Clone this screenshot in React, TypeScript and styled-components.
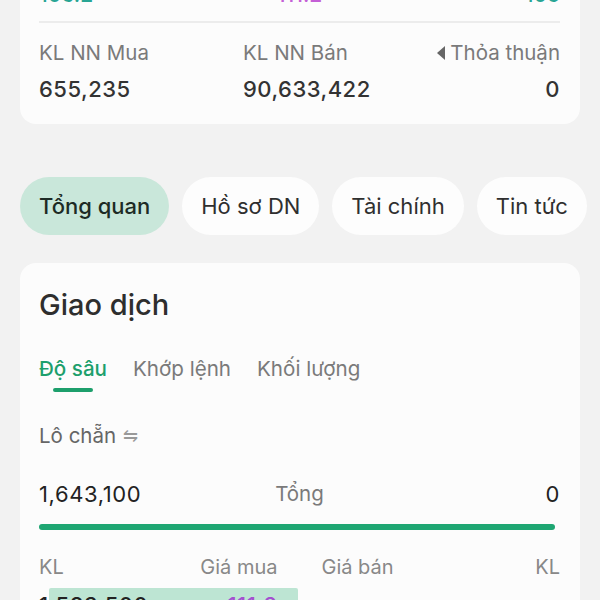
import React from "react";
import styled, { createGlobalStyle } from "styled-components";

const GlobalStyle = createGlobalStyle`
  html, body {
    margin: 0;
    padding: 0;
    background: #f2f2f2;
    font-family: Inter, "Noto Sans", "Liberation Sans", sans-serif;
    color: #333;
  }
`;

const Page = styled.div`
  width: 600px;
  height: 600px;
  overflow: hidden;
  padding: 0 20px;
  box-sizing: border-box;
`;

const Card = styled.div<{ $top?: number }>`
  background: #fcfcfc;
  border-radius: 16px;
  margin-top: ${(p) => p.$top ?? 0}px;
  padding: 16px 20px 21px 19px;
`;

const StatRow = styled.div`
  display: grid;
  grid-template-columns: 1fr 1fr 1fr;
  line-height: 24px;
  font-size: 21px;
  font-weight: 500;
`;

const StatValue = styled.span<{ $color: string; $align?: string }>`
  color: ${(p) => p.$color};
  text-align: ${(p) => p.$align ?? "left"};
`;

const Divider = styled.div`
  height: 2px;
  background: #ececec;
  margin-top: 14px;
`;

const InfoGrid = styled.div`
  display: grid;
  grid-template-columns: 204px 1fr auto;
  row-gap: 8px;
  margin-top: 16px;
`;

const InfoLabel = styled.div<{ $align?: string }>`
  font-size: 20.5px;
  line-height: 28px;
  color: #7a7a7a;
  display: flex;
  align-items: center;
  justify-content: ${(p) => (p.$align === "right" ? "flex-end" : "flex-start")};
  gap: 5px;
`;

const Caret = styled.span`
  width: 0;
  height: 0;
  border-top: 7px solid transparent;
  border-bottom: 7px solid transparent;
  border-right: 8px solid #666;
`;

const InfoValue = styled.div<{ $align?: string }>`
  font-size: 22px;
  line-height: 28px;
  font-weight: 500;
  color: #333;
  letter-spacing: 0.5px;
  text-align: ${(p) => p.$align ?? "left"};
`;

const PillBar = styled.div`
  display: flex;
  gap: 13px;
  margin-top: 53px;
  white-space: nowrap;
`;

const Pill = styled.div<{ $active?: boolean }>`
  height: 58px;
  padding: 0 19px;
  border-radius: 29px;
  display: flex;
  align-items: center;
  font-size: 22px;
  font-weight: ${(p) => (p.$active ? 500 : 400)};
  background: ${(p) => (p.$active ? "#c9e7da" : "#fdfdfd")};
  color: ${(p) => (p.$active ? "#1d2b25" : "#2f2f2f")};
  flex-shrink: 0;
`;

const TradeCard = styled.div`
  background: #fcfcfc;
  border-radius: 16px;
  margin-top: 28px;
  padding: 26px 20px 0 19px;
`;

const Title = styled.h2`
  margin: 0;
  font-size: 29px;
  line-height: 32px;
  font-weight: 500;
  color: #2e2e2e;
`;

const SubTabs = styled.div`
  display: flex;
  gap: 26px;
  margin-top: 34px;
`;

const SubTab = styled.div<{ $active?: boolean }>`
  display: flex;
  flex-direction: column;
  align-items: center;
  font-size: 20.6px;
  line-height: 28px;
  color: ${(p) => (p.$active ? "#1d9f6c" : "#7a7a7a")};
  font-weight: ${(p) => (p.$active ? 500 : 400)};

  &::after {
    content: "";
    width: 40px;
    height: 4px;
    border-radius: 2px;
    margin-top: 5px;
    background: ${(p) => (p.$active ? "#1d9f6c" : "transparent")};
  }
`;

const LotLabel = styled.div`
  margin-top: 31px;
  font-size: 20.5px;
  line-height: 26px;
  color: #666;
  display: flex;
  align-items: center;
  gap: 7px;
`;

const SwapIcon = styled.span`
  font-size: 18px;
  color: #999;
`;

const TotalRow = styled.div`
  margin-top: 31px;
  display: grid;
  grid-template-columns: 1fr auto 1fr;
  font-size: 22px;
  line-height: 28px;
`;

const TotalValue = styled.span<{ $align?: string }>`
  color: #222;
  letter-spacing: 0.6px;
  text-align: ${(p) => p.$align ?? "left"};
`;

const TotalLabel = styled.span`
  color: #7a7a7a;
  font-size: 20.5px;
`;

const Progress = styled.div`
  margin-top: 16px;
  margin-right: 5px;
  height: 6px;
  border-radius: 3px;
  background: #1ea672;
`;

const BookHead = styled.div`
  margin-top: 25px;
  display: grid;
  grid-template-columns: 1fr 1fr;
  font-size: 20px;
  line-height: 24px;
  color: #888;
`;

const HeadSide = styled.div<{ $side: "buy" | "sell" }>`
  display: flex;
  justify-content: space-between;
  padding: ${(p) => (p.$side === "buy" ? "0 22px 0 0" : "0 0 0 22px")};
`;

const BookRow = styled.div`
  margin-top: 9px;
  display: grid;
  grid-template-columns: 1fr 1fr;
`;

const BuyCell = styled.div`
  position: relative;
  display: flex;
  justify-content: space-between;
  padding: 3px 22px 0 0;
  font-size: 22px;
  line-height: 28px;
  font-weight: 500;
`;

const DepthBar = styled.div`
  position: absolute;
  top: 0;
  bottom: 0;
  right: 2px;
  background: #bde5d3;
  border-radius: 2px;
`;

const CellText = styled.span<{ $color?: string }>`
  position: relative;
  color: ${(p) => p.$color ?? "#222"};
  letter-spacing: 0.5px;
`;

export default function App() {
  return (
    <Page>
      <GlobalStyle />
      <Card $top={-33}>
        <StatRow>
          <StatValue $color="#28a594">106.2</StatValue>
          <StatValue $color="#c45fd6" $align="center">111.2</StatValue>
          <StatValue $color="#28a594" $align="right">105</StatValue>
        </StatRow>
        <Divider />
        <InfoGrid>
          <InfoLabel>KL NN Mua</InfoLabel>
          <InfoLabel>KL NN Bán</InfoLabel>
          <InfoLabel $align="right">
            <Caret />
            Thỏa thuận
          </InfoLabel>
          <InfoValue>655,235</InfoValue>
          <InfoValue>90,633,422</InfoValue>
          <InfoValue $align="right">0</InfoValue>
        </InfoGrid>
      </Card>

      <PillBar>
        <Pill $active>Tổng quan</Pill>
        <Pill>Hồ sơ DN</Pill>
        <Pill>Tài chính</Pill>
        <Pill>Tin tức</Pill>
      </PillBar>

      <TradeCard>
        <Title>Giao dịch</Title>
        <SubTabs>
          <SubTab $active>Độ sâu</SubTab>
          <SubTab>Khớp lệnh</SubTab>
          <SubTab>Khối lượng</SubTab>
        </SubTabs>
        <LotLabel>
          Lô chẵn <SwapIcon>⇋</SwapIcon>
        </LotLabel>
        <TotalRow>
          <TotalValue>1,643,100</TotalValue>
          <TotalLabel>Tổng</TotalLabel>
          <TotalValue $align="right">0</TotalValue>
        </TotalRow>
        <Progress />
        <BookHead>
          <HeadSide $side="buy">
            <span>KL</span>
            <span>Giá mua</span>
          </HeadSide>
          <HeadSide $side="sell">
            <span>Giá bán</span>
            <span>KL</span>
          </HeadSide>
        </BookHead>
        <BookRow>
          <BuyCell>
            <DepthBar style={{ width: `${(249 / 261) * 100}%` }} />
            <CellText>1,583,500</CellText>
            <CellText $color="#a44fd0">111.2</CellText>
          </BuyCell>
          <div />
        </BookRow>
      </TradeCard>
    </Page>
  );
}
